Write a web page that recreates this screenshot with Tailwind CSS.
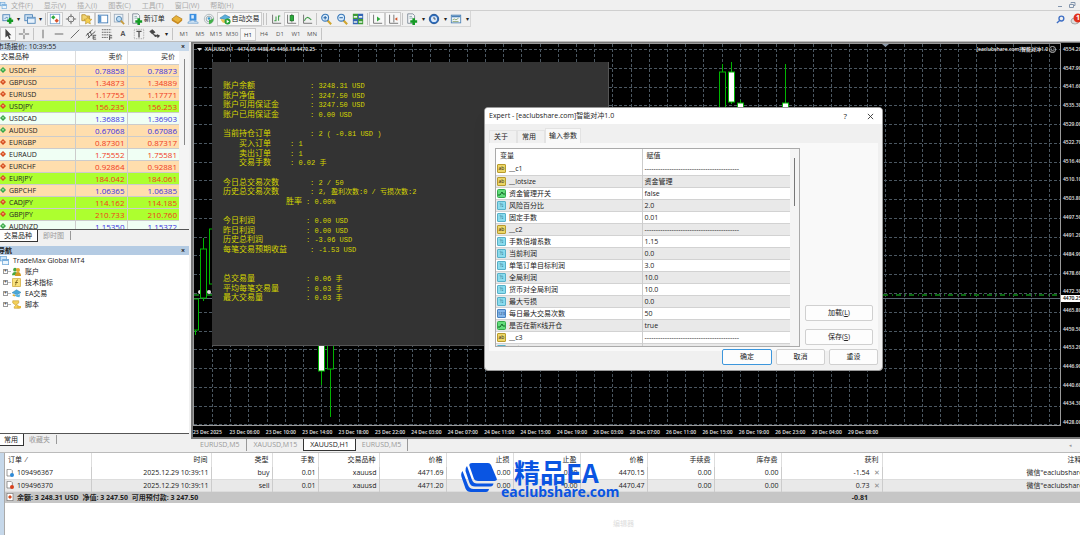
<!DOCTYPE html>
<html lang="zh-CN">

<head>
  <meta charset="UTF-8">
  <meta name="viewport" content="width=device-width, initial-scale=1.0">
  <title>MT4 - XAUUSD,H1</title>
  <script src="https://cdn.jsdelivr.net/npm/@tailwindcss/browser@4"></script>
</head>

<body class="h-screen overflow-hidden flex flex-col bg-[#f0f0f0] text-[#222] text-[7px] leading-[12px] whitespace-nowrap font-['Open_Sans','Noto_Sans_CJK_SC',sans-serif]">

  <!-- icon sprite -->
  <svg class="hidden">
    <symbol id="i-newchart" viewBox="0 0 14 14"><rect x="1" y="2" width="8" height="7" fill="#d8e8f6" stroke="#4a80b5"/><path d="M3 7l2-2 2 1" stroke="#4a80b5" fill="none"/><path d="M6 9h7M9.500 5.500v7" stroke="#149a24" stroke-width="3"/></symbol>
    <symbol id="i-profiles" viewBox="0 0 14 14"><rect x="1" y="2" width="9" height="7" fill="#cfe2f4" stroke="#4a80b5"/><rect x="4" y="5" width="9" height="7" fill="#e6f1fb" stroke="#4a80b5"/><path d="M4 6.500h9" stroke="#7aa9d6"/></symbol>
    <symbol id="i-market" viewBox="0 0 14 14"><rect x="1.500" y="1.500" width="11" height="11" fill="#fff" stroke="#7aa6cf"/><path d="M5 2.500l2.500 2.500L5 7.500 2.500 5z" fill="#2fa83c"/><path d="M9 6.500l2.500 2.500L9 11.500 6.500 9z" fill="#d9532c"/></symbol>
    <symbol id="i-cross" viewBox="0 0 14 14"><circle cx="7" cy="7" r="3.500" fill="none" stroke="#666"/><path d="M7 1v4M7 9v4M1 7h4M9 7h4" stroke="#666"/></symbol>
    <symbol id="i-folder" viewBox="0 0 14 14"><path d="M1 2h4l1 1.500h4V9H1z" fill="#f2d470" stroke="#b8912e"/><path d="M8 4l1.400 3 3.300.4-2.400 2.200.6 3.200L8 11.200l-2.900 1.600.6-3.200-2.400-2.200L6.600 7z" fill="#f6cf4e" stroke="#b8912e" stroke-width=".7"/></symbol>
    <symbol id="i-term" viewBox="0 0 14 14"><rect x="1.500" y="2.500" width="11" height="9" fill="#fff" stroke="#3c78b4"/><path d="M2 3h3v8H2z" fill="#5b96d0"/></symbol>
    <symbol id="i-tester" viewBox="0 0 14 14"><rect x="1.500" y="1.500" width="10" height="9" fill="#e9f1f8" stroke="#9aaabb"/><circle cx="7" cy="7" r="3" fill="#bcdcf5" stroke="#4a7eac"/><path d="M9 9l4 4" stroke="#c89b3a" stroke-width="2"/></symbol>
    <symbol id="i-order" viewBox="0 0 14 14"><path d="M2 1h6l2 2v9H2z" fill="#f4f6f8" stroke="#7a8794"/><path d="M4 4h3M4 6h4" stroke="#8aa"/><path d="M5 10h8M9 6v8" stroke="#149a24" stroke-width="3"/></symbol>
    <symbol id="i-book" viewBox="0 0 14 14"><path d="M1 7l5-4 7 4-5 5z" fill="#e8b33a" stroke="#a8741a" stroke-width=".8"/><path d="M1 7v2l7 4 5-4V7l-5 4z" fill="#c98a20"/></symbol>
    <symbol id="i-signal" viewBox="0 0 14 14"><path d="M3 1h8v8H3z" fill="#3b8fe0"/><path d="M5 2.500h3v4H5z" fill="#d8ecff"/><path d="M1 12c0-3 3-2 4-3 2-1 4 0 4 1 3-.5 4 .5 4 2z" fill="#cfe3f5" stroke="#5b93c8" stroke-width=".7"/></symbol>
    <symbol id="i-radio" viewBox="0 0 14 14"><circle cx="7" cy="7" r="5.500" fill="none" stroke="#a9b4b8"/><circle cx="7" cy="7" r="3.300" fill="none" stroke="#8fa0a8"/><circle cx="7" cy="6.500" r="1.500" fill="#3a9ad0"/><path d="M7 13V8c3 0 5-1 5-3 1 4-1 7-5 8z" fill="#43b04a"/></symbol>
    <symbol id="i-auto" viewBox="0 0 14 14"><path d="M1 6l6-4 6 3-5 3z" fill="#5bb0dc" stroke="#2d7ba8" stroke-width=".7"/><path d="M2 7c1 4 3 5 7 5l2-5-4 1z" fill="#e8c455"/><circle cx="10" cy="10" r="3.500" fill="#23a035"/><path d="M9 8l3 2-3 2z" fill="#fff"/></symbol>
    <symbol id="i-bars" viewBox="0 0 14 14"><path d="M3 2v10h10" stroke="#666" fill="none"/><path d="M5 9h2V4M10 9V3M10 3.500h2" stroke="#3a9a44" stroke-width="1.200" fill="none"/></symbol>
    <symbol id="i-candle" viewBox="0 0 14 14"><path d="M3 2v10h10M8 1v10" stroke="#666" fill="none"/><rect x="6" y="3" width="4" height="6" fill="#2bab3c" stroke="#1b7a28"/></symbol>
    <symbol id="i-line" viewBox="0 0 14 14"><path d="M3 2v10h10" stroke="#666" fill="none"/><path d="M4 9c2-5 4-5 8-1" stroke="#3a9a44" stroke-width="1.200" fill="none"/></symbol>
    <symbol id="i-zin" viewBox="0 0 14 14"><path d="M8 8l5 5" stroke="#d0a52e" stroke-width="2.500"/><circle cx="6" cy="5.500" r="4" fill="#d9ecfb" stroke="#3a78b8" stroke-width="1.300"/><path d="M4 5.500h4M6 3.500v4" stroke="#2562a5" stroke-width="1.200"/></symbol>
    <symbol id="i-zout" viewBox="0 0 14 14"><path d="M8 8l5 5" stroke="#d0a52e" stroke-width="2.500"/><circle cx="6" cy="5.500" r="4" fill="#d9ecfb" stroke="#3a78b8" stroke-width="1.300"/><path d="M4 5.500h4" stroke="#2562a5" stroke-width="1.200"/></symbol>
    <symbol id="i-tile" viewBox="0 0 14 14"><path d="M1 1h6v6H1zM7 7h6v6H7z" fill="#3e9c36"/><path d="M7 1h6v6H7zM1 7h6v6H1z" fill="#3565b5"/><path d="M2 4.500h4M8 4.500h4M2 10.500h4M8 10.500h4" stroke="#e8f2e8" stroke-width="2"/></symbol>
    <symbol id="i-scroll" viewBox="0 0 14 14"><path d="M3 2v10h10" stroke="#666" fill="none"/><path d="M7 4l4 3-4 3z" fill="#2fa83c"/></symbol>
    <symbol id="i-shift" viewBox="0 0 14 14"><path d="M3 2v10h10M8 2v9" stroke="#666" fill="none"/><path d="M12 5v4L9 7z" fill="#d2542a"/></symbol>
    <symbol id="i-clock" viewBox="0 0 14 14"><circle cx="7" cy="7" r="5.500" fill="#2e6fc0" stroke="#1c4d8e"/><circle cx="7" cy="7" r="3.600" fill="#dceafb"/><path d="M7 4.500V7h2" stroke="#345" fill="none"/></symbol>
    <symbol id="i-tpl" viewBox="0 0 14 14"><rect x="1.500" y="2.500" width="11" height="9" fill="#eef5fb" stroke="#4a80b5"/><path d="M2 4h10" stroke="#4a80b5" stroke-width="2"/><path d="M3 8l2-1 2 1 3-2M3 10h7" stroke="#8aa36b" fill="none"/></symbol>
    <symbol id="i-cursor" viewBox="0 0 14 14"><path d="M4 1v10l2.500-2 2 4 1.500-1-1.800-3.500H11z" fill="#444"/></symbol>
    <symbol id="i-plus" viewBox="0 0 14 14"><path d="M7 1v5M7 8v5M1 7h5M8 7h5" stroke="#555"/></symbol>
    <symbol id="i-v" viewBox="0 0 14 14"><path d="M7 2v10" stroke="#555"/></symbol>
    <symbol id="i-h" viewBox="0 0 14 14"><path d="M2 7h10" stroke="#555"/></symbol>
    <symbol id="i-trend" viewBox="0 0 14 14"><path d="M2 12L12 2" stroke="#555"/></symbol>
    <symbol id="i-chan" viewBox="0 0 14 14"><path d="M1 9l8-7M3 12l9-8M3 6l2 5M6 4l2 5" stroke="#444"/><path d="M9.500 8.500V13H13M9.500 8.500H13M9.500 10.700h3" fill="none" stroke="#444"/></symbol>
    <symbol id="i-fib" viewBox="0 0 14 14"><path d="M1 2h11M1 5h11M1 8h11M1 11h7" stroke="#555" stroke-dasharray="2 .7"/><path d="M10 14V9h3M10 11.500h3" fill="none" stroke="#444"/></symbol>
    <symbol id="i-arrows" viewBox="0 0 14 14"><path d="M4 2l3 3-3 2-3-3zM5 7l2 3 4-1" fill="#444" stroke="#444"/><path d="M9 7l4 2-3 3z" fill="#444"/></symbol>
    <symbol id="i-text" viewBox="0 0 14 14"><rect x="1.500" y="1.500" width="11" height="11" fill="none" stroke="#999" stroke-dasharray="1 1"/><path d="M4 4h6M7 4v7" stroke="#555" stroke-width="1.600"/></symbol>
    <symbol id="i-up" viewBox="0 0 8 8"><path d="M4 0l4 4-4 4-4-4z" fill="#35a545"/><path d="M4 2l2 2-2 1-2-1z" fill="#9fe0a5"/></symbol>
    <symbol id="i-down" viewBox="0 0 8 8"><path d="M4 0l4 4-4 4-4-4z" fill="#d4491c"/><path d="M4 2l2 2-2 1-2-1z" fill="#f5a27c"/></symbol>
    <symbol id="i-wins" viewBox="0 0 12 12"><rect x=".5" y=".5" width="8" height="6" fill="#cfe5f8" stroke="#6aa5d8"/><rect x="3.500" y="4.500" width="8" height="7" fill="#eaf5fd" stroke="#6aa5d8"/><path d="M4 5.500h7" stroke="#6aa5d8" stroke-width="2"/></symbol>
    <symbol id="i-acct" viewBox="0 0 12 12"><circle cx="4" cy="3.500" r="2.500" fill="#4aa63e"/><path d="M0 11c0-6 8-6 8 0z" fill="#4aa63e"/><circle cx="8" cy="4" r="2.700" fill="#e3a92d"/><path d="M4 12c0-7 8-7 8 0z" fill="#d39a20"/></symbol>
    <symbol id="i-fx" viewBox="0 0 12 12"><rect x=".5" y=".5" width="11" height="11" rx="1" fill="#f9e27c" stroke="#c9a133"/><path d="M8 3c-2-1-2 1-2.500 3S5 10 4 9.500M4 6h4" stroke="#6a5212" fill="none"/></symbol>
    <symbol id="i-ea" viewBox="0 0 12 12"><path d="M0 5l6-4 6 3.500-5 3z" fill="#4aa8d8" stroke="#2d7ba8" stroke-width=".6"/><path d="M3 7c1 3 3 4 7 4l1-4-4 1z" fill="#59b5e3"/><path d="M1 8l3 1" stroke="#dfae35" stroke-width="2"/></symbol>
    <symbol id="i-script" viewBox="0 0 12 12"><path d="M1 1h8v3L6 6l4 3v2H3V9l2-2-4-3z" fill="#f3d05a" stroke="#c49b32" stroke-width=".8"/><path d="M7 8h5v3H7z" fill="#e7b93a"/></symbol>
    <symbol id="i-doc-b" viewBox="0 0 12 12"><path d="M1.500.5h6l2 2v8h-8z" fill="#fff" stroke="#666"/><circle cx="9" cy="9" r="3" fill="#2e8bd8"/></symbol>
    <symbol id="i-doc-s" viewBox="0 0 12 12"><path d="M1.500.5h6l2 2v8h-8z" fill="#fff" stroke="#666"/><circle cx="9" cy="9" r="3" fill="#d8401c"/></symbol>
    <symbol id="i-bal" viewBox="0 0 12 12"><rect x="1.500" y=".5" width="9" height="11" fill="#fff" stroke="#777"/><path d="M6 3l3 3-3 3-3-3z" fill="#d4491c"/></symbol>
  </svg>

  <!-- menu bar -->
  <header class="flex h-[11px] shrink-0 items-center border-b border-[#cfcfcf] leading-[9px] text-[#aaa]">
    <svg class="mr-1 size-[7px]"><use href="#i-wins"/></svg>
    <nav class="flex gap-[11px]" id="menu"></nav>
    <div class="ml-auto flex gap-1 pr-1 text-[#8395ad]">
      <button aria-label="最小化" class="flex h-2 w-2 items-end justify-center"><i class="mb-[2px] h-px w-1 bg-[#8395ad]"></i></button>
      <button aria-label="还原" class="h-2 w-2"><svg viewBox="0 0 8 8" class="size-2" fill="none" stroke="#8395ad"><path d="M3 2.500V1.500h4v3H6M1.500 3.500h4v3h-4z"/></svg></button>
    </div>
  </header>

  <!-- toolbars -->
  <div class="flex h-4 shrink-0 items-center">
    <div class="flex h-full w-[471px] items-center border-r border-b border-[#d6d6d6]" id="tools"></div>
    <div class="ml-auto flex items-center gap-[5px]">
      <button aria-label="搜索"><svg viewBox="0 0 10 10" class="size-[9px]" fill="none" stroke="#3f6fc4" stroke-width="1.500"><circle cx="6" cy="4" r="2.700"/><path d="M4 6L1 9"/></svg></button>
      <button aria-label="消息" class="relative h-3 w-[10px] overflow-hidden">
        <svg viewBox="0 0 10 12" class="h-3 w-[10px]"><ellipse cx="5" cy="8" rx="4" ry="3" fill="#ddd" stroke="#aaa"/><circle cx="8" cy="5" r="4.500" fill="#e0301a"/></svg>
        <span class="absolute top-px right-0 text-[7px] leading-2 font-bold text-white">1</span>
      </button>
    </div>
  </div>
  <div class="flex h-[14px] shrink-0 items-center" id="tools2"></div>

  <main class="flex min-h-0 flex-1 border-t border-[#bbb]">
    <!-- left column -->
    <aside class="flex w-[191px] shrink-0 flex-col pr-[2px]">
      <div class="flex h-[9px] items-center justify-between bg-[#c6d8ea] pr-1 leading-[9px]"><span class="-ml-[3px]">市场报价: 10:39:55</span><button class="font-bold" aria-label="关闭市场报价">×</button></div>
      <div class="flex h-[179px] overflow-hidden border-b border-[#555] bg-white">
        <table class="w-[179px] shrink-0 table-fixed self-start border-collapse">
          <thead>
            <tr class="h-[13px]">
              <th class="w-[75px] border-r border-[#ddd] pl-px text-left font-normal">交易品种</th>
              <th class="w-[52px] border-r border-[#ddd] pr-1 text-right font-normal">卖价</th>
              <th class="pr-1 text-right font-normal">买价</th>
            </tr>
          </thead>
          <tbody id="quotes"></tbody>
        </table>
        <div class="flex-1 bg-[#f4f4f4] pt-[8px]"><div class="mx-auto h-[86px] w-px bg-[#888]"></div></div>
      </div>
      <div class="flex h-[16px] items-start">
        <button class="h-[12px] border-r border-b border-[#333] bg-white pr-[5px] pl-[4px] leading-[11px]">交易品种</button>
        <button class="mt-px h-[9px] border-r border-[#999] pr-[6px] pl-[5px] leading-[9px] text-[#999]">即时图</button>
      </div>
      <div class="flex h-[9px] items-center justify-between bg-[#b4cbe3] pr-1 leading-[9px]"><span class="-ml-[2px] font-bold">导航</span><button class="font-bold" aria-label="关闭导航">×</button></div>
      <div class="flex-1 bg-white text-[7px]" id="tree"></div>
      <div class="flex h-[19px] shrink-0 items-start border-t border-[#555]">
        <button class="h-[12px] border-r border-b border-[#333] bg-white pr-[5px] pl-[4px] leading-[11px]">常用</button>
        <button class="mt-px h-[9px] border-r border-[#999] pr-[6px] pl-[5px] leading-[9px] text-[#999]">收藏夹</button>
      </div>
    </aside>

    <!-- chart -->
    <section class="flex min-w-0 flex-1 flex-col">
      <div class="flex min-h-0 flex-1 flex-col border-t border-b-2 border-l-2 border-[#777] bg-black text-[5px] leading-[8px] font-semibold text-[#e4e4e4]">
        <div class="flex min-h-0 flex-1">
          <div class="relative min-w-0 flex-1 border border-[#9a9a9a]">
            <svg class="absolute inset-0 h-full w-full" id="plot"></svg>
            <div class="relative flex items-center justify-between pt-[1px] pr-1 pl-[3px]">
              <span class="flex items-center"><svg viewBox="0 0 5 3" class="mr-[3px] h-[3px] w-[5px]" fill="#ddd"><path d="M0 0h5L2.500 3z"/></svg>XAUUSD,H1 &nbsp; 4474.09 4488.40 4466.18 4470.25</span>
              <span class="flex items-center gap-px">[eaclubshare.com]智能对冲1.0<svg viewBox="0 0 8 8" class="size-[7px]" fill="none" stroke="#ccc"><circle cx="4" cy="4" r="3.500"/><path d="M2.500 3.500h1M4.500 3.500h1M2.500 5.500h3"/></svg></span>
            </div>
            <div class="absolute top-[18px] left-[18px] grid h-[284px] w-[397px] content-start border-r border-b border-[#555] bg-[#333] pt-[19px] pl-[11px] font-normal text-[#d6d600]">
              <div class="grid h-[222px] auto-rows-fr text-[8px] leading-[10px] font-['Liberation_Mono','Noto_Sans_CJK_SC',monospace]" id="stats"></div>
            </div>
          </div>
          <div class="relative w-[19px] shrink-0 pt-[2px]">
            <div class="flex h-full flex-col justify-between pl-[2px]" id="prices"></div>
            <span class="absolute top-[252px] left-0 w-full bg-white pl-[2px] leading-[7px] text-black">4470.25</span>
          </div>
        </div>
        <div class="flex h-[11px] items-center" id="times"></div>
      </div>
      <div class="flex h-[13px] items-start text-[#999]">
        <button class="pr-[7px] pl-[9px] leading-[12px]">EURUSD,M5</button>
        <button class="border-l border-[#999] px-[6px] leading-[12px]">XAUUSD,M15</button>
        <button class="border-r border-b border-l border-[#333] bg-white px-[6px] leading-[11px] text-[#222]">XAUUSD,H1</button>
        <button class="border-r border-[#999] px-[6px] leading-[12px]">EURUSD,M5</button>
        <span class="ml-auto pr-2 text-[5px]">◂</span>
      </div>
    </section>
  </main>

  <!-- terminal -->
  <section class="flex h-[83px] shrink-0 overflow-hidden border-t border-[#bbb]">
    <div class="w-[5px] shrink-0 border-r border-[#aaa] bg-[#c6d8ea]"></div>
    <div class="flex-1 bg-white">
      <table class="w-[1094px] table-fixed border-collapse">
        <thead id="ordersHead"></thead>
        <tbody id="orders"></tbody>
      </table>
    </div>
  </section>

  <!-- EA settings dialog -->
  <div role="dialog" aria-labelledby="dlgTitle" class="absolute top-[107px] left-[484px] w-[399px] overflow-hidden rounded-[4px] border border-[#999] bg-[#f0f0f0] shadow-lg">
    <div class="flex h-4 items-center bg-white pr-2 pl-1">
      <h1 id="dlgTitle" class="flex-1">Expert - [eaclubshare.com]智能对冲1.0</h1>
      <button class="mr-[20px] text-[8px]" aria-label="帮助">?</button>
      <button aria-label="关闭"><svg viewBox="0 0 8 8" class="size-[7px]" stroke="#333" fill="none"><path d="M1 1l6 6M7 1L1 7"/></svg></button>
    </div>
    <div class="flex items-end px-[4px] pt-[4px]">
      <button class="h-[13px] border border-b-0 border-[#e3e3e3] pr-[8px] pl-[4px]">关于</button>
      <button class="h-[13px] border border-b-0 border-[#e3e3e3] pr-[8px] pl-[4px]">常用</button>
      <button class="h-[15px] border border-b-0 border-[#e3e3e3] bg-[#f9f9f9] px-[3px]">输入参数</button>
    </div>
    <div class="mx-[4px] flex h-[208px] gap-[5px] bg-[#f9f9f9] py-[5px] pr-[5px] pl-[6px]">
      <div class="flex h-[199px] w-[305px] overflow-hidden border border-[#aaa] bg-white">
        <table class="w-[294px] table-fixed self-start border-collapse">
          <thead>
            <tr class="h-[14px]">
              <th class="w-[146px] border-r border-[#ccc] pl-[4px] text-left font-normal">变量</th>
              <th class="pl-[4px] text-left font-normal">赋值</th>
            </tr>
          </thead>
          <tbody id="params"></tbody>
        </table>
        <div class="flex-1 bg-[#f4f4f4] pt-[9px]"><div class="mx-auto h-[48px] w-px bg-[#777]"></div></div>
      </div>
      <div class="flex flex-1 flex-col justify-end gap-[8px] pb-px">
        <button class="h-4 rounded-[2px] border border-[#d0d0d0] bg-[#fdfdfd]">加载(<u>L</u>)</button>
        <button class="h-4 rounded-[2px] border border-[#d0d0d0] bg-[#fdfdfd]">保存(<u>S</u>)</button>
      </div>
    </div>
    <div class="-mt-[2px] flex justify-end gap-[4px] pr-[4px] pb-[5px]">
      <button class="h-4 w-[50px] rounded-[2px] border border-[#3c96dc] bg-[#fdfdfd]">确定</button>
      <button class="h-4 w-[49px] rounded-[2px] border border-[#d0d0d0] bg-[#fdfdfd]">取消</button>
      <button class="h-4 w-[49px] rounded-[2px] border border-[#d0d0d0] bg-[#fdfdfd]">重设</button>
    </div>
  </div>

  <!-- watermark -->
  <div class="pointer-events-none absolute top-[458px] left-[461px] flex text-[#0a55e2] font-['Noto_Sans_CJK_SC',sans-serif]">
    <svg viewBox="0 0 36 30" class="mt-[5px] h-[30px] w-9" fill="#0a55e2">
      <path d="M11 0h16q2 0 3 2l5.500 13q1 3-2 3H17q-3 0-4-2L8.500 3q-1-3 2.500-3z"/>
      <path d="M6 3l5 14q1.500 3.500 5 3.500h16.500q-.5 3-3 3H14q-4 0-5.500-3.500L4.500 8Q4 5 6 3z"/>
      <path d="M1.500 8l5.500 14q1.500 4 5.500 4H28q-.5 3-3 3H10q-4 0-5.500-3.500L.5 14Q-.5 10.500 1.500 8z"/>
    </svg>
    <div class="flex flex-col">
      <b class="pl-[17px] text-[26px] leading-[27px]">精品EA</b>
      <b class="pl-[4px] text-[14px] leading-[14px] font-['Noto_Sans',sans-serif]">eaclubshare.com</b>
    </div>
  </div>
  <span class="absolute top-[518px] left-[613px] text-[#ddd]">编辑器</span>

  <script>
    const $ = (id) => document.getElementById(id);
    const icon = (n, cls) => `<svg class="${cls}"><use href="#i-${n}"/></svg>`;

    $("menu").innerHTML = ["文件(F)", "显示(V)", "插入(I)", "图表(C)", "工具(T)", "窗口(W)", "帮助(H)"]
      .map((m) => `<button>${m}</button>`).join("");

    // toolbar: names, "|" separator, "v" drop arrow, "*" pressed
    const tool = (t) => {
      if (t === "|") return `<i class="mx-px h-3 w-px bg-[#c4c4c4]"></i>`;
      if (t === "v") return `<span class="w-[6px] text-center text-[6px] leading-[8px]">▾</span>`;
      const on = t.startsWith("*");
      const [name, label] = t.replace("*", "").split(":");
      if (label) return `<button class="${on ? "flex h-[14px] items-center gap-px border border-[#ccc] bg-[#f8f8f8] px-px" : "mr-[3px] flex h-[14px] items-center gap-px px-px"}">${icon(name, "size-3")}${label}</button>`;
      return `<button aria-label="${name}" class="${on ? "flex h-[14px] w-4 items-center justify-center border border-[#ccc] bg-[#f8f8f8]" : "flex h-[14px] w-4 items-center justify-center"}">${icon(name, "size-3")}</button>`;
    };
    $("tools").innerHTML = ["newchart", "v", "profiles", "v", "|", "*market", "cross", "*folder", "*term", "tester", "|", "order:新订单", "book", "signal", "radio", "*auto:自动交易", "|", "|", "bars", "*candle", "line", "|", "zin", "zout", "tile", "|", "*scroll", "*shift", "|", "order", "v", "clock", "v", "tpl", "v"].map(tool).join("");
    $("tools2").innerHTML = ["*cursor", "plus", "|"].map(tool).join("")
      + `<button aria-label="v" class="flex w-4 justify-center">${icon("v", "size-3")}</button>`
      + ["h", "trend", "chan", "fib"].map(tool).join("")
      + `<button class="w-4 font-bold text-[#555]">A</button>` + tool("text") + tool("arrows") + tool("v") + `<i class="mx-[3px] h-3 w-px bg-[#c4c4c4]"></i>`
      + ["M1", "M5", "M15", "M30", "H1", "H4", "D1", "W1", "MN"].map((p) => `<button class="${p === "H1" ? "h-[13px] w-4 border border-[#ccc] bg-[#f8f8f8] text-[6px]" : "h-[13px] w-4 text-[6px] text-[#555]"}">${p}</button>`).join("") + tool("|");

    // symbol, bid, ask, arrow, price colour, row colour
    const QUOTES = [
      ["USDCHF", "0.78858", "0.78873", "up", "b", "o"], ["GBPUSD", "1.34873", "1.34889", "down", "r", "o"],
      ["EURUSD", "1.17755", "1.17771", "down", "r", "o"], ["USDJPY", "156.235", "156.253", "down", "r", "g"],
      ["USDCAD", "1.36883", "1.36903", "up", "b", "m"], ["AUDUSD", "0.67068", "0.67086", "up", "b", "o"],
      ["EURGBP", "0.87301", "0.87317", "down", "r", "o"], ["EURAUD", "1.75552", "1.75581", "down", "r", "m"],
      ["EURCHF", "0.92864", "0.92881", "down", "r", "o"], ["EURJPY", "184.042", "184.061", "down", "r", "g"],
      ["GBPCHF", "1.06365", "1.06385", "up", "b", "o"], ["CADJPY", "114.162", "114.185", "down", "r", "g"],
      ["GBPJPY", "210.733", "210.760", "down", "r", "g"], ["AUDNZD", "1.15350", "1.15372", "up", "b", "m"],
    ];
    const BG = { o: "h-3 border-t border-[#ccc] bg-[#ffdead]", g: "h-3 border-t border-[#ccc] bg-[#adff2f]", m: "h-3 border-t border-[#ccc] bg-[#f0fff4]" };
    const FG = { b: "text-[#3b32e0]", r: "text-[#f03a1c]" };
    $("quotes").innerHTML = QUOTES.map(([s, bid, ask, dir, c, bg]) => `<tr class="${BG[bg]}">
      <td class="border-r border-[#ccc] leading-[11px]"><span class="flex items-center gap-[3px]">${icon(dir, "size-[6px]")}${s}</span></td>
      <td class="border-r border-[#ccc] pr-[2px] text-right text-[8px] leading-[11px] ${FG[c]}">${bid}</td>
      <td class="pr-[2px] text-right text-[8px] leading-[11px] ${FG[c]}">${ask}</td></tr>`).join("");

    $("tree").innerHTML = `<div class="flex h-[11px] items-center gap-1">${icon("wins", "size-[9px]")}<span class="font-medium">TradeMax Global MT4</span></div>`
      + [["acct", "账户"], ["fx", "技术指标"], ["ea", "EA交易"], ["script", "脚本"]].map(([i, t]) => `<div class="flex h-[11px] items-center pl-[3px]">
        <span class="flex size-[5px] items-center justify-center border border-[#999] text-[5px] leading-[5px]">+</span><i class="mr-px h-px w-[3px] bg-[#bbb]"></i>${icon(i, "mr-[4px] size-[9px]")}${t}</div>`).join("");

    // indent, label, label column width, value
    const STATS = [
      [0, "账户余额", 87, "3248.31 USD"], [0, "账户净值", 87, "3247.50 USD"], [0, "账户可用保证金", 87, "3247.50 USD"], [0, "账户已用保证金", 87, "0.00 USD"], null,
      [0, "当前持仓订单", 87, "2 ( -0.81 USD )"], [16, "买入订单", 67, "1"], [16, "卖出订单", 67, "1"], [16, "交易手数", 67, "0.02 手"], null,
      [0, "今日总交易次数", 87, "2 / 50"], [0, "历史总交易次数", 87, "2, 盈利次数:0 / 亏损次数:2"], [63, "胜率", 83, "0.00%"], null,
      [0, "今日利润", 83, "0.00 USD"], [0, "昨日利润", 83, "0.00 USD"], [0, "历史总利润", 83, "-3.06 USD"], [0, "每笔交易预期收益", 87, "-1.53 USD"], null, null,
      [0, "总交易量", 83, "0.06 手"], [0, "平均每笔交易量", 83, "0.03 手"], [0, "最大交易量", 83, "0.03 手"],
    ];
    $("stats").innerHTML = STATS.map((s) => s ? `<div class="flex"><span style="width:${s[2]}px;padding-left:${s[0]}px">${s[1]}</span><span class="text-[7px]">: ${s[3]}</span></div>` : `<div></div>`).join("");

    const P = ["4554.20", "4547.90", "4541.60", "4535.30", "4529.00", "4522.70", "4516.40", "4510.10", "4503.80", "4497.50", "4491.20", "4484.90", "4478.60", "4472.30", "4465.80", "4459.50", "4453.20", "4446.90", "4440.60", "4434.30", "4428.00"];
    $("prices").innerHTML = P.map((p) => `<span>${p}</span>`).join("");
    const T = ["23 Dec 2025", "23 Dec 06:00", "23 Dec 10:00", "23 Dec 14:00", "23 Dec 18:00", "23 Dec 22:00", "24 Dec 03:00", "24 Dec 07:00", "24 Dec 11:00", "24 Dec 15:00", "24 Dec 19:00", "26 Dec 03:00", "26 Dec 07:00", "26 Dec 11:00", "26 Dec 15:00", "26 Dec 19:00", "26 Dec 23:00", "29 Dec 04:00", "29 Dec 08:00"];
    $("times").innerHTML = T.map((t) => `<span class="shrink-0" style="width:${(18.2 * 2).toFixed(1)}px">${t}</span>`).join("");

    // grid and candles
    let g = "";
    for (let i = 0; i < 47; i++) {
      const x = Math.round(18.2 * i + 18) + 0.5;
      g += `<line x1="${x}" x2="${x}" y1="0" y2="100%" stroke="#4b5761" stroke-dasharray="3 2"/>`;
    }
    for (let i = 0; i < 21; i++) {
      const y = Math.round(18.77 * i + 5) + 0.5;
      g += `<line y1="${y}" y2="${y}" x1="0" x2="100%" stroke="#4b5761" stroke-dasharray="3 2"/>`;
    }
    g += `<line y1="251" y2="251" x1="0" x2="100%" stroke="#0b6a12" stroke-width="2" stroke-dasharray="5 4 1 3"/><line y1="254.500" y2="254.500" x1="0" x2="100%" stroke="#5a6672"/>`;
    g += `<path d="M688 0h7l-3.500 3z" fill="#8a98a8"/><circle cx="6" cy="248" r="2" fill="#ddd"/><circle cx="15" cy="248" r="2" fill="#ddd"/>`;
    // x, high, low, top, bottom, fill
    const C = [
      [1, 255, 291, 255, 286, "#000"], [9, 194, 257, 205, 254, "#000"], [18, 185, 240, 185, 240, "#000"],
      [127, 250, 341, 250, 327, "#fff"], [136, 250, 373, 250, 325, "#000"],
      [528, 20, 70, 28, 70, "#000"], [537, 18, 60, 28, 58, "#fff"], [546, 56, 70, 59, 70, "#fff"], [591, 20, 70, 59, 70, "#fff"],
    ];
    C.forEach(([x, h, l, t, b, f]) => {
      g += `<path d="M${x}.5 ${h}V${l}" stroke="#00b400"/><rect x="${x - 2.5}" y="${t}" width="6" height="${b - t}" fill="${f}" stroke="#00b400"/>`;
    });
    $("plot").innerHTML = g;

    const DASH = "-".repeat(42);
    const PARAMS = [["ab", "__c1", DASH], ["ab", "__lotsize", "资金管理"], ["bool", "资金管理开关", "false"], ["v", "风险百分比", "2.0"], ["v", "固定手数", "0.01"], ["ab", "__c2", DASH], ["v", "手数倍增系数", "1.15"], ["v", "当前利润", "0.0"], ["v", "单笔订单目标利润", "3.0"], ["v", "全局利润", "10.0"], ["v", "货币对全局利润", "10.0"], ["v", "最大亏损", "0.0"], ["int", "每日最大交易次数", "50"], ["bool", "是否在新K线开仓", "true"], ["ab", "__c3", DASH], ["v", "加载间隔点", "0"]];
    const KIND = {
      ab: `<span class="size-[9px] rounded-[1px] border border-[#b99b2c] bg-[#ecd667] text-center text-[5px] leading-[7px]">ab</span>`,
      v: `<span class="size-[9px] rounded-[1px] border border-[#57b0c8] bg-[#8bdcee] text-center text-[5px] leading-[7px] text-[#246a80]">½</span>`,
      int: `<span class="size-[9px] rounded-[1px] border border-[#4a83c0] bg-[#85b8ec] text-center text-[4px] leading-[7px] text-[#123d70]">123</span>`,
      bool: `<svg viewBox="0 0 9 9" class="size-[9px]"><rect x=".5" y=".5" width="8" height="8" rx="1" fill="#63dd7b" stroke="#35a84c"/><path d="M1 6h2l2-3 1 2h2" fill="none" stroke="#14672a"/></svg>`,
    };
    $("params").innerHTML = PARAMS.map(([k, n, v], i) => `<tr class="${i % 2 ? "h-3 border-y border-[#d2d2d2] bg-[#e9e9e9]" : "h-3"}">
      <td class="border-r border-[#ccc] pl-px leading-[11px]"><span class="flex items-center gap-[3px]">${KIND[k]}${n}</span></td>
      <td class="overflow-hidden pl-[2px] leading-[11px]">${v}</td></tr>`).join("");

    const H = [["订单 &nbsp;⁄", "w-[86px]"], ["时间", "w-[120px]"], ["类型", "w-[61px]"], ["手数", "w-[46px]"], ["交易品种", "w-[61px]"], ["价格", "w-[67px]"], ["止损", "w-[67px]"], ["止盈", "w-[67px]"], ["价格", "w-[67px]"], ["手续费", "w-[67px]"], ["库存费", "w-[67px]"], ["获利", "w-[101px]"]];
    $("ordersHead").innerHTML = `<tr class="h-[14px]">` + H.map(([t, w], i) => `<th class="border-r border-[#ddd] font-normal ${w} ${i ? "text-right pr-[3px]" : "text-left pl-[3px]"}">${t}</th>`).join("") + `<th class="w-[217px] pl-[185px] text-left font-normal">注释</th></tr>`;
    const O = [
      ["b", "109496367", "2025.12.29 10:39:11", "buy", "0.01", "xauusd", "4471.69", "0.00", "0.00", "4470.15", "0.00", "0.00", "-1.54"],
      ["s", "109496370", "2025.12.29 10:39:11", "sell", "0.01", "xauusd", "4471.20", "0.00", "0.00", "4470.47", "0.00", "0.00", "0.73"],
    ];
    $("orders").innerHTML = O.map(([k, id, ...r], i) => `<tr class="${i ? "h-3 border-y border-[#ddd] bg-[#e9e9e9]" : "h-3"}">
      <td class="border-r border-[#ccc] pl-px leading-[11px]"><span class="flex items-center gap-[3px]">${icon("doc-" + k, "size-2")}${id}</span></td>
      ${r.map((c, j) => `<td class="border-r border-[#ccc] pr-[2px] text-right leading-[11px]">${c}${j === 10 ? `<button class="pl-[4px] text-[#888]" aria-label="平仓">✕</button>` : ""}</td>`).join("")}
      <td class="pl-[144px] text-left leading-[11px]">微信"eaclubshare"</td></tr>`).join("")
      + `<tr class="h-3 bg-[#c6c6c6] font-bold"><td colspan="11" class="pl-px leading-[11px]"><span class="flex items-center gap-[3px]">${icon("bal", "size-2")}余额: 3 248.31 USD&nbsp; 净值: 3 247.50&nbsp; 可用预付款: 3 247.50</span></td><td class="pr-[14px] text-right leading-[11px]">-0.81</td><td></td></tr>`;
  </script>
</body>

</html>
